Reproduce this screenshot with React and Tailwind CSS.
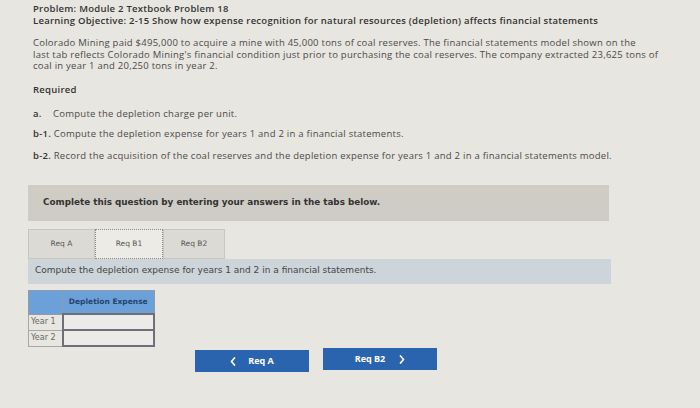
function Chevron({ dir }) {
  return (
    <svg width="6" height="9" viewBox="0 0 6 9" fill="none" stroke="currentColor" strokeWidth="1.7" strokeLinecap="round" strokeLinejoin="round">
      {dir === 'left' ? <path d="M4.5 1 1.5 4.5 4.5 8" /> : <path d="M1.5 1 4.5 4.5 1.5 8" />}
    </svg>
  )
}

export default function App() {
  return (
    <main className="h-[408px] w-[700px] overflow-hidden bg-[#e8e6e0] text-[#2f2f2f]" style={{ fontFamily: '"Open Sans", Lato, sans-serif' }}>
      <section className="pl-[33px] pr-2 pt-[3px] text-[9.5px] leading-[11.5px] tracking-[0.25px]">
        <h1 className="font-semibold text-[#333]">Problem: Module 2 Textbook Problem 18</h1>
        <p className="font-semibold text-[#333]">
          Learning Objective: 2-15 Show how expense recognition for natural resources (depletion) affects financial statements
        </p>
        <p className="mt-[11px] whitespace-nowrap text-[#4a4a4a]">
          Colorado Mining paid $495,000 to acquire a mine with 45,000 tons of coal reserves. The financial statements model shown on the
          <br />
          last tab reflects Colorado Mining&apos;s financial condition just prior to purchasing the coal reserves. The company extracted 23,625 tons of
          <br />
          coal in year 1 and 20,250 tons in year 2.
        </p>
        <p className="mt-[12px] font-semibold text-[#333]">Required</p>
        <div className="mt-[13px] flex text-[#4a4a4a]">
          <span className="w-5 font-semibold text-[#333]">a.</span>
          <span>Compute the depletion charge per unit.</span>
        </div>
        <p className="mt-[8px] text-[#4a4a4a]">
          <span className="font-semibold text-[#333]">b-1.</span> Compute the depletion expense for years 1 and 2 in a financial statements.
        </p>
        <p className="mt-[11px] text-[#4a4a4a]">
          <span className="font-semibold text-[#333]">b-2.</span> Record the acquisition of the coal reserves and the depletion expense for years 1 and 2 in a financial statements model.
        </p>
      </section>

      <section className="ml-[28px] mt-[23px] w-[581px]" style={{ fontFamily: '"DejaVu Sans", Verdana, sans-serif' }}>
        <div className="flex h-[36px] items-center bg-[#cfccc5] pl-[15px] text-[8.8px] font-bold text-[#333]">
          Complete this question by entering your answers in the tabs below.
        </div>

        <div className="mt-[8px] flex h-[30px] text-[7.5px] text-[#555]">
          <div className="flex w-[67px] items-center justify-center border border-[#c9c6bf] bg-[#dcdad4]">Req A</div>
          <div className="flex w-[68px] items-center justify-center border border-dotted border-[#8a8a8a] bg-[#ecebe6]">Req B1</div>
          <div className="flex w-[62px] items-center justify-center border border-[#c9c6bf] bg-[#dcdad4]">Req B2</div>
        </div>

        <div className="flex h-[25px] w-[583px] items-center bg-[#cdd5da] pl-[7px] text-[9px] text-[#444]">
          Compute the depletion expense for years 1 and 2 in a financial statements.
        </div>

        <div className="mt-[6px] flex">
          <table className="w-[127px] border-collapse text-[8px]">
            <thead>
              <tr className="h-[24px] bg-[#6ca0d8]">
                <th className="w-[34px] border border-[#8f9ba6]"></th>
                <th className="border border-[#8f9ba6] text-[7.5px] font-bold text-[#24446e]">Depletion Expense</th>
              </tr>
            </thead>
            <tbody className="text-[#666]">
              <tr className="h-[16px]">
                <td className="border border-[#a9a7a2] pl-[2px]">Year 1</td>
                <td className="border-2 border-[#6f6f78] bg-[#ecebe7]"></td>
              </tr>
              <tr className="h-[16px]">
                <td className="border border-[#a9a7a2] pl-[2px]">Year 2</td>
                <td className="border-2 border-[#6f6f78] bg-[#ecebe7]"></td>
              </tr>
            </tbody>
          </table>
        </div>
      </section>

      <div className="ml-[195px] mt-[3px] flex gap-[14px] text-[9px] font-bold text-white">
        <button className="flex h-[22px] w-[114px] items-center justify-center gap-[12px] bg-[#2b64ae]">
          <Chevron dir="left" />
          <span>Req A</span>
        </button>
        <button className="-mt-[2px] flex h-[22px] w-[114px] items-center justify-center gap-[14px] bg-[#2b64ae]">
          <span>Req B2</span>
          <Chevron dir="right" />
        </button>
      </div>
    </main>
  )
}
